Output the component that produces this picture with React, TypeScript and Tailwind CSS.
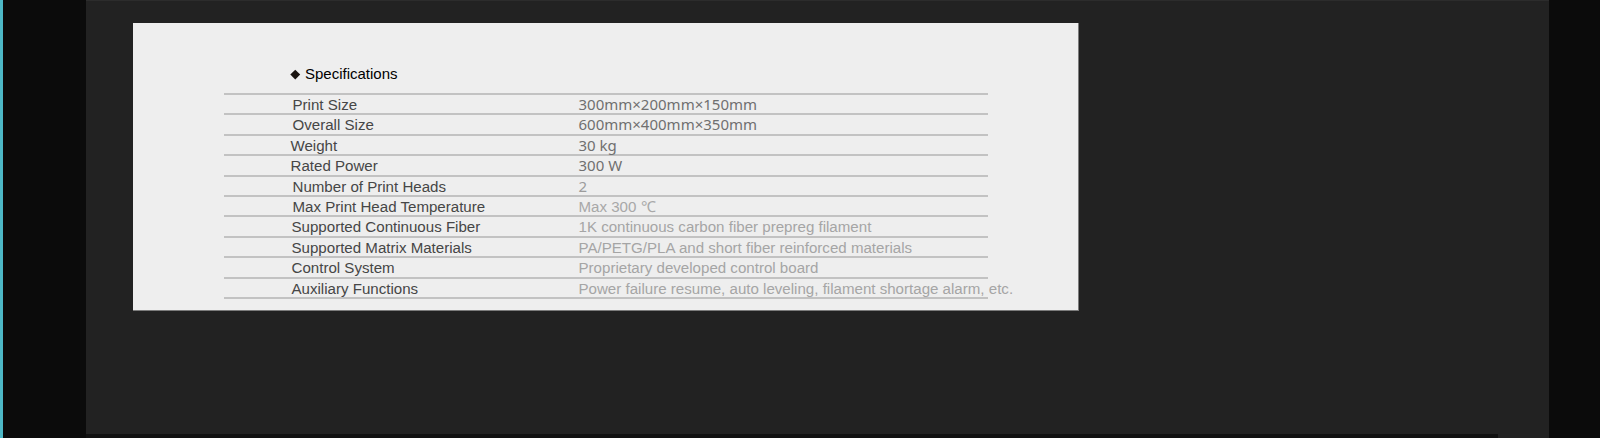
const specs: { label: string; value: string; indent: string; tone: string; font: string }[] = [
  { label: "Print Size", value: "300mm×200mm×150mm", indent: "pl-[69px]", tone: "text-[#707070]", font: "noto" },
  { label: "Overall Size", value: "600mm×400mm×350mm", indent: "pl-[69px]", tone: "text-[#707070]", font: "noto" },
  { label: "Weight", value: "30 kg", indent: "pl-[67px]", tone: "text-[#707070]", font: "noto" },
  { label: "Rated Power", value: "300 W", indent: "pl-[67px]", tone: "text-[#707070]", font: "noto" },
  { label: "Number of Print Heads", value: "2", indent: "pl-[69px]", tone: "text-[#9c9c9c]", font: "noto" },
  { label: "Max Print Head Temperature", value: "Max 300 ℃", indent: "pl-[69px]", tone: "text-[#a8a8a8]", font: "arial" },
  { label: "Supported Continuous Fiber", value: "1K continuous carbon fiber prepreg filament", indent: "pl-[68px]", tone: "text-[#a5a5a5]", font: "arial" },
  { label: "Supported Matrix Materials", value: "PA/PETG/PLA and short fiber reinforced materials", indent: "pl-[68px]", tone: "text-[#a5a5a5]", font: "arial" },
  { label: "Control System", value: "Proprietary developed control board", indent: "pl-[68px]", tone: "text-[#a5a5a5]", font: "arial" },
  { label: "Auxiliary Functions", value: "Power failure resume, auto leveling, filament shortage alarm, etc.", indent: "pl-[68px]", tone: "text-[#a5a5a5]", font: "arial" },
];

function SpecRow({ label, value, indent, tone, font }: (typeof specs)[number]) {
  return (
    <div className="flex h-[20.4px] items-start border-b-2 border-[#c2c2c2] whitespace-nowrap text-[15.1px] leading-[20px]">
      <div className={`w-[355px] shrink-0 text-[#464646] ${indent}`}>{label}</div>
      <div
        className={`${tone} ${
          font === "noto" ? "font-['Noto_Sans',sans-serif] text-[15px] leading-[19px]" : "font-['Liberation_Sans',Arial,sans-serif]"
        }`}
      >
        {value}
      </div>
    </div>
  );
}

export default function App() {
  return (
    <div className="flex h-[438px] w-full overflow-hidden bg-[#0b0b0b] font-['Liberation_Sans',Arial,sans-serif]">
      <div className="w-[3px] shrink-0 bg-[#4db8c6]" />
      <div className="w-[83px] shrink-0 bg-[#0b0b0b]" />
      <div className="flex w-[1463px] shrink-0 flex-col border-t border-[#2c2c2c] bg-[#222222]">
        <div className="ml-[47px] mt-[21.5px] h-[288px] w-[946px] border-r border-b border-[#7c7c7c] bg-[#eeeeee]">
          <div className="ml-[90.5px] w-[764px]">
            <div className="mt-[42.5px] flex h-[18px] items-center text-[15px] leading-[18px] text-[#000000]">
              <span className="ml-[68px] mr-[6px] inline-block h-[6.5px] w-[6.5px] rotate-45 bg-[#1a1410]" />
              <span className="ml-[1px]">Specifications</span>
            </div>
            <div className="mt-[10px] border-t-2 border-[#c2c2c2]">
              {specs.map((s) => (
                <SpecRow key={s.label} {...s} />
              ))}
            </div>
          </div>
        </div>
        <div className="mt-auto h-[4px] w-[1412px] bg-[#111111]" />
      </div>
      <div className="flex-1 bg-[#0b0b0b]" />
    </div>
  );
}
